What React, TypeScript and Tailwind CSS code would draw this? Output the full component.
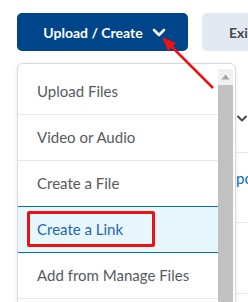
import React from "react";

const items = ["Upload Files", "Video or Audio", "Create a File", "Create a Link", "Add from Manage Files"];

export default function App() {
  return (
    <div className="relative w-[248px] h-[302px] overflow-hidden bg-white" style={{ fontFamily: "Lato, 'Noto Sans', sans-serif" }}>
      <div className="flex flex-row pt-[13px] pl-[17px] gap-[14px]">
        <div className="w-[171px] h-[38px] shrink-0 rounded-[5px] bg-[#004489] flex items-center justify-center gap-[9px] pl-[4px]">
          <span className="text-white font-bold text-[14px] whitespace-nowrap">Upload / Create</span>
          <svg width="14" height="10" viewBox="0 0 14 10" className="mt-[2px]">
            <polyline points="2,2 7,7 12,2" fill="none" stroke="white" strokeWidth="2.6" strokeLinecap="round" strokeLinejoin="round" />
          </svg>
        </div>
        <div className="w-[120px] h-[38px] shrink-0 rounded-[5px] bg-[#e3e9f1] flex items-center pl-[27px]">
          <span className="text-[#494c4e] font-bold text-[14px] whitespace-nowrap">Existing Activities</span>
        </div>
      </div>

      {/* background content (partially visible) */}
      <div className="ml-[236px] mt-[49px] flex flex-col">
        <div className="h-[52px] flex items-start pt-[15px]">
          <svg width="12" height="8" viewBox="0 0 12 8"><polyline points="2,1.5 6,5.5 10,1.5" fill="none" stroke="#494c4e" strokeWidth="2" strokeLinecap="round" strokeLinejoin="round" /></svg>
        </div>
        <div className="h-[70px] border-t border-[#e3e9f1] flex items-start pt-[16px]">
          <span className="text-[#006fbf] text-[15px] leading-[18px]">po</span>
        </div>
        <div className="h-[71px] border-t border-[#e3e9f1]"></div>
        <div className="h-[20px] border-t border-[#e3e9f1]"></div>
      </div>

      {/* dropdown menu */}
      <div className="absolute left-[17px] top-[63px] w-[219px] h-[260px] bg-white border border-[#d3d9e3] rounded-[6px] shadow-[0_2px_6px_rgba(0,0,0,0.08)] flex flex-row overflow-hidden">
        <div className="flex-1 pt-[5px] flex flex-col">
          {items.map((t, i) => {
            const sel = i === 3;
            const nextSel = i === 2;
            return (
              <div
                key={t}
                className={
                  "h-[46px] shrink-0 flex items-center pl-[19px] text-[15px] whitespace-nowrap " +
                  (sel
                    ? "bg-[#e8f6fd] text-[#1f66ad] border-b border-[#006fbf]"
                    : nextSel
                    ? "text-[#565a5c] border-b border-[#006fbf]"
                    : "text-[#565a5c] border-b border-[#e3e9f1]")
                }
              >
                {t}
              </div>
            );
          })}
        </div>
        <div className="w-[15px] mr-[2px] mt-[5px] bg-[#f1f1f1] flex flex-col items-center">
          <svg width="9" height="6" viewBox="0 0 9 6" className="mt-[5px]"><polygon points="4.5,0.5 8.5,5.5 0.5,5.5" fill="#a3a3a3" /></svg>
          <div className="w-[15px] flex-1 mt-[5px] bg-[#c1c1c1]"></div>
        </div>
      </div>

      {/* red highlight box */}
      <div className="absolute left-[27px] top-[211px] w-[128px] h-[36px] border-[3px] border-[#ee1111] rounded-[2px]"></div>

      {/* red arrow */}
      <svg className="absolute left-0 top-0" width="248" height="302" viewBox="0 0 248 302">
        <line x1="213" y1="88" x2="170" y2="45" stroke="#ee1111" strokeWidth="2.5" />
        <polygon points="162,37 176,43 168,51" fill="#ee1111" />
      </svg>
    </div>
  );
}
